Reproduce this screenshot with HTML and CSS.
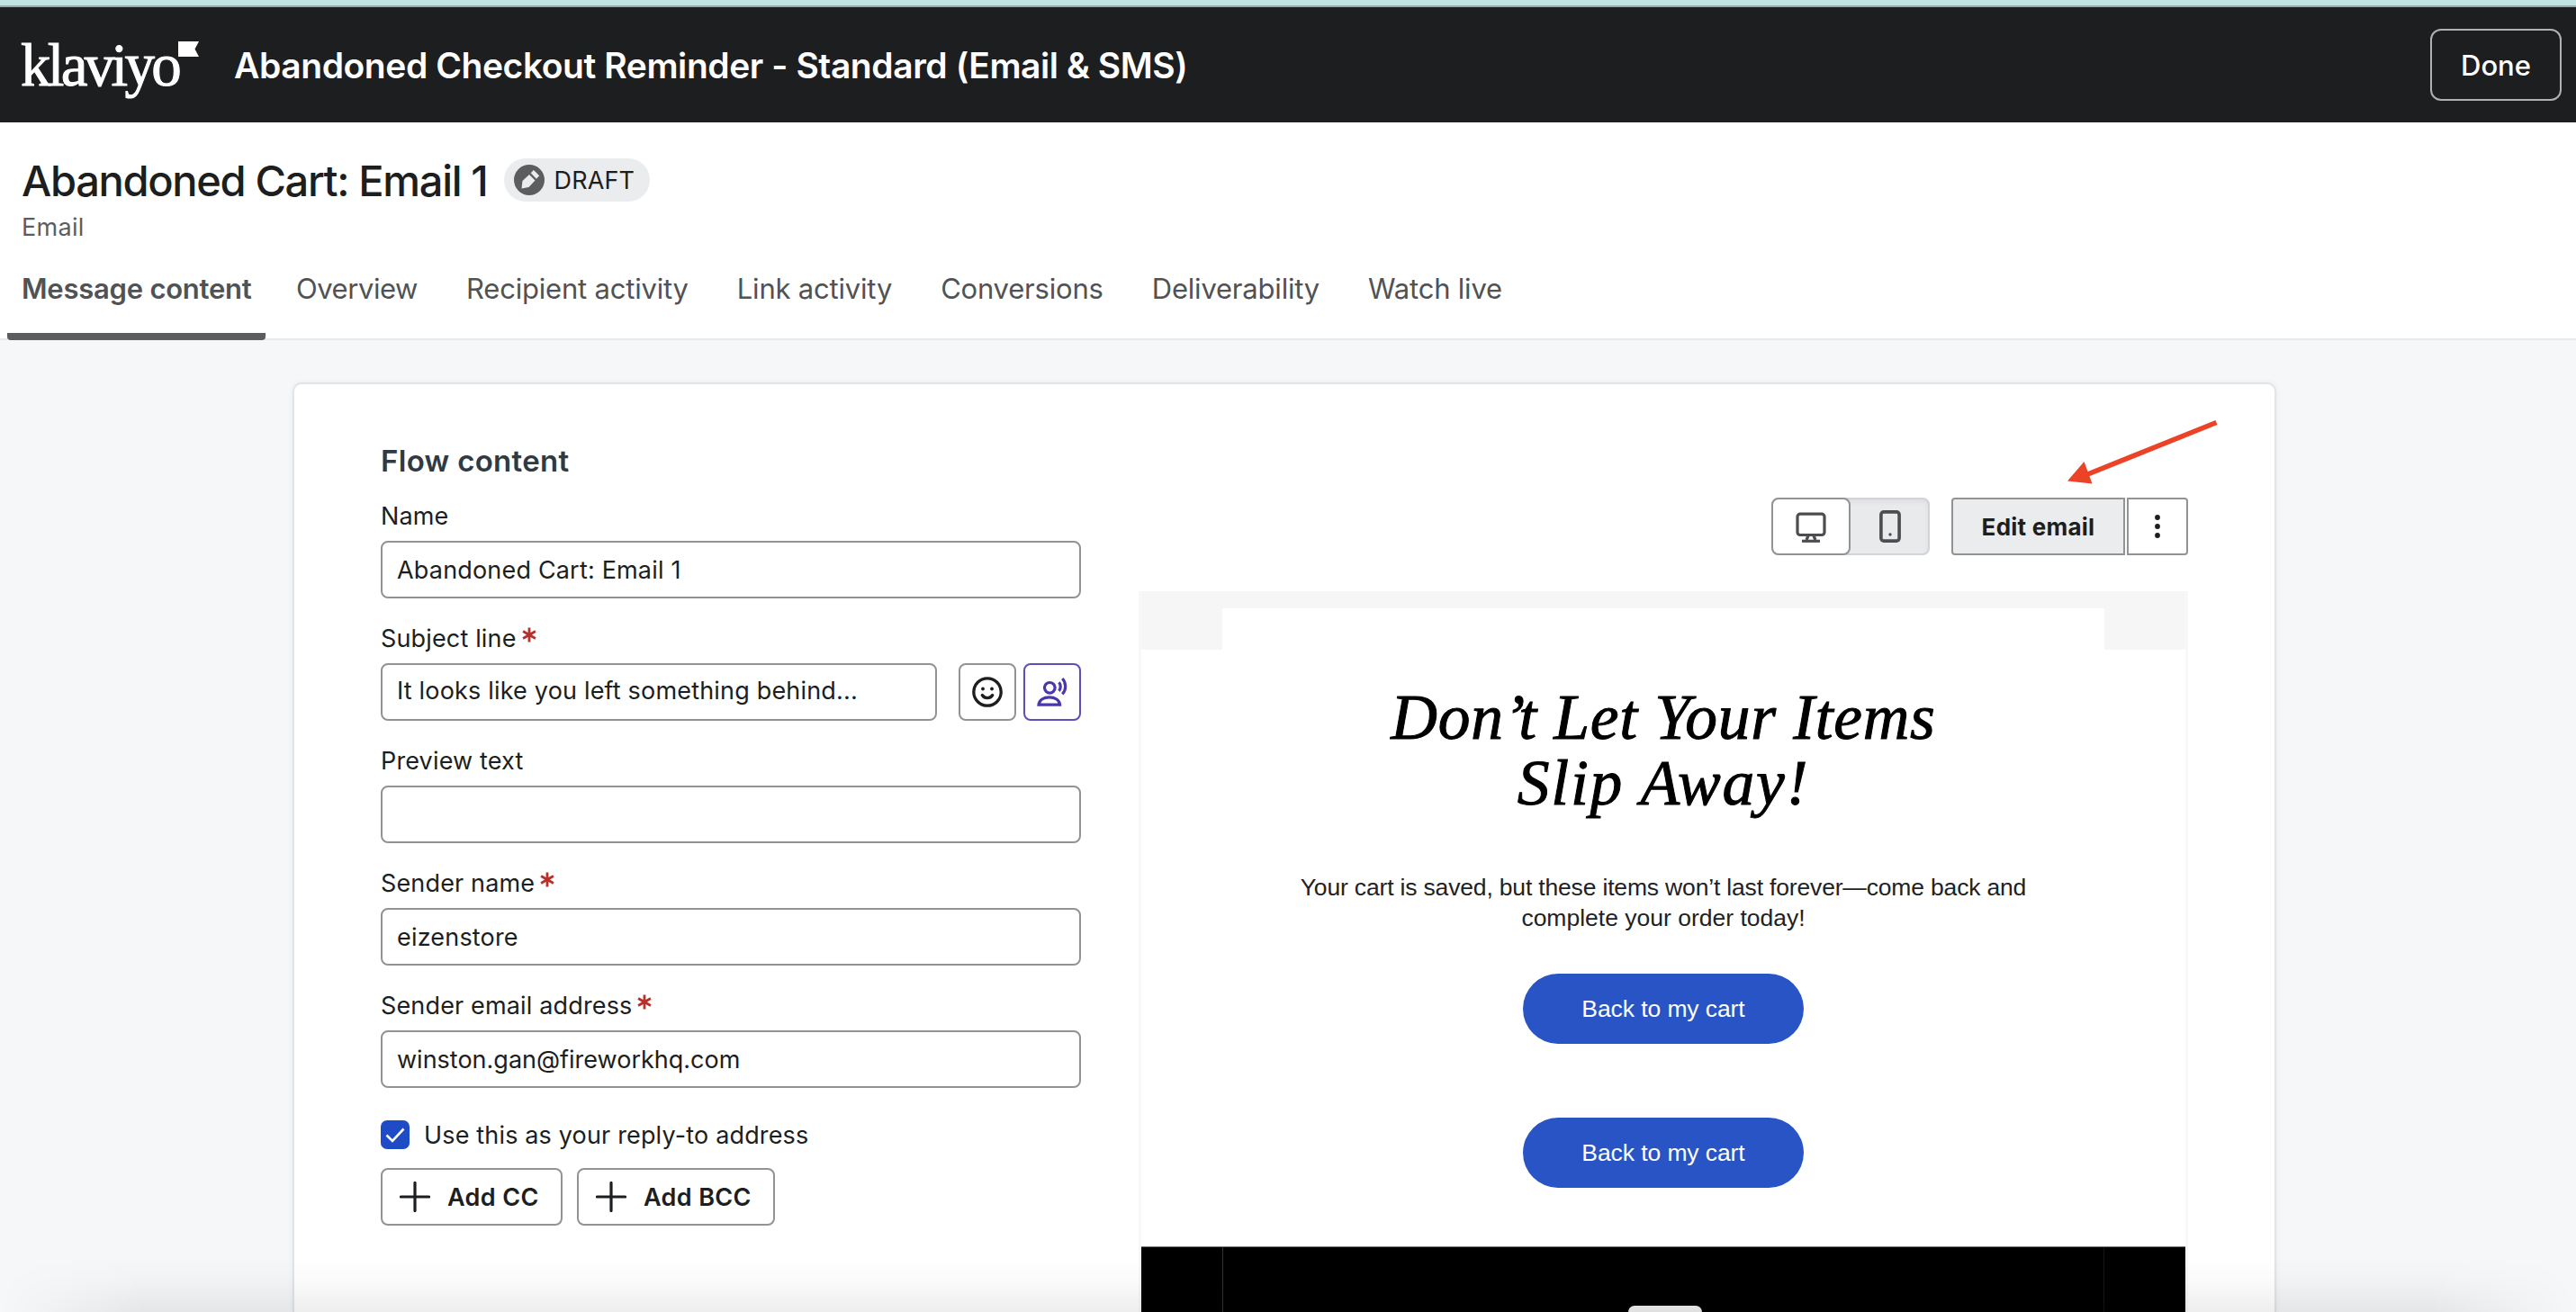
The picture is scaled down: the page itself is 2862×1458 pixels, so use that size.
FILE: index.html
```
<!DOCTYPE html>
<html lang="en">
<head>
<meta charset="utf-8">
<title>Abandoned Cart: Email 1</title>
<link rel="stylesheet" href="styles.css">
</head>
<body>
<header class="topbar">
  <div class="logo">
    <span class="logo-word">klaviyo</span>
    <svg class="logo-flag" width="23" height="17" viewBox="0 0 23 17"><path d="M0 0h23l-4.500 8.500L23 17H0z" fill="#fff"/></svg>
  </div>
  <div class="flow-title">Abandoned Checkout Reminder - Standard (Email &amp; SMS)</div>
  <button class="done">Done</button>
</header>

<section class="page-head">
  <div class="title-row">
    <h1>Abandoned Cart: Email 1</h1>
    <span class="pill">
      <svg width="34" height="34" viewBox="0 0 34 34"><circle cx="17" cy="17" r="17" fill="#5c5d5f"/><path d="M8.500 26.500 9.500 18 17 11l6.500 6.500-7 7.500z" fill="#ebecee"/><path d="m18.700 9.300 3.200-3.300 6.300 6.300-3.300 3.400z" fill="#ebecee"/></svg>
      <span>DRAFT</span>
    </span>
  </div>
  <div class="kind">Email</div>
  <nav class="tabs">
    <a class="tab active">Message content</a>
    <a class="tab overview">Overview</a>
    <a class="tab">Recipient activity</a>
    <a class="tab">Link activity</a>
    <a class="tab">Conversions</a>
    <a class="tab">Deliverability</a>
    <a class="tab">Watch live</a>
  </nav>
</section>

<main class="main">
  <div class="card">
    <form class="form">
      <h2>Flow content</h2>
      <div class="field">
        <label>Name</label>
        <div class="input">Abandoned Cart: Email 1</div>
      </div>
      <div class="field">
        <label>Subject line <svg class="req" viewBox="0 0 16 16"><path d="M8 0v16M1.100 4l13.800 8M14.900 4 1.100 12"/></svg></label>
        <div class="subject">
          <div class="input grow">It looks like you left something behind...</div>
          <button type="button" class="icon-btn">
            <svg width="34" height="34" viewBox="0 0 34 34" fill="none" stroke="#1d1e20" stroke-width="3.300"><circle cx="17" cy="17" r="15.200"/><path d="M11.300 20.500c1.400 2.100 3.400 3.100 5.700 3.100s4.300-1 5.700-3.100" stroke-linecap="round"/><circle cx="12" cy="13.500" r="1.900" fill="#1d1e20" stroke="none"/><circle cx="22" cy="13.500" r="1.900" fill="#1d1e20" stroke="none"/></svg>
          </button>
          <button type="button" class="icon-btn accent">
            <svg width="34" height="34" viewBox="0 0 34 34" fill="none" stroke="#4b37ab" stroke-width="3.200"><circle cx="14.300" cy="12.300" r="5.800"/><path d="M2 31.200c.4-5.400 5.600-8.400 11.800-8.400s11.400 3 11.800 8.400z"/><path d="M24.500 6.200c2.300 2.600 2.300 7 0 9.700M28.300 2c4.500 4.700 4.500 12.800 0 17.300"/></svg>
          </button>
        </div>
      </div>
      <div class="field">
        <label>Preview text</label>
        <div class="input"></div>
      </div>
      <div class="field">
        <label>Sender name <svg class="req" viewBox="0 0 16 16"><path d="M8 0v16M1.100 4l13.800 8M14.900 4 1.100 12"/></svg></label>
        <div class="input">eizenstore</div>
      </div>
      <div class="field">
        <label>Sender email address <svg class="req" viewBox="0 0 16 16"><path d="M8 0v16M1.100 4l13.800 8M14.900 4 1.100 12"/></svg></label>
        <div class="input email">winston.gan@fireworkhq.com</div>
      </div>
      <div class="check-row">
        <span class="checkbox"><svg width="32" height="32" viewBox="0 0 32 32"><path d="m6.500 16.500 6.500 6.500L25.500 9.500" fill="none" stroke="#fff" stroke-width="2.600"/></svg></span>
        <span>Use this as your reply-to address</span>
      </div>
      <div class="add-row">
        <button type="button" class="add">
          <svg width="34" height="34" viewBox="0 0 34 34"><path d="M17 1.500v31M1.500 17h31" stroke="#1d1e20" stroke-width="3.200" stroke-linecap="round"/></svg>Add CC
        </button>
        <button type="button" class="add bcc">
          <svg width="34" height="34" viewBox="0 0 34 34"><path d="M17 1.500v31M1.500 17h31" stroke="#1d1e20" stroke-width="3.200" stroke-linecap="round"/></svg>Add BCC
        </button>
      </div>
    </form>

    <div class="preview-col">
      <div class="toolbar">
        <div class="device">
          <span class="dev on"><svg width="34" height="34" viewBox="0 0 34 34" fill="none" stroke="#4c4d50" stroke-width="3.200"><rect x="2" y="2.200" width="30" height="23.300" rx="3"/><path d="M14 26.500 12 31M20 26.500 22 31"/><path d="M7 32.300h20"/></svg></span>
          <span class="dev"><svg width="24" height="36" viewBox="0 0 24 36" fill="none" stroke="#4c4d50" stroke-width="3.600"><rect x="1.900" y="1.900" width="20.200" height="32.200" rx="3"/><circle cx="12" cy="27" r="1.700" fill="#4c4d50" stroke="none"/></svg></span>
        </div>
        <div class="actions">
          <button class="edit">Edit email</button>
          <button class="more"><svg width="8" height="28" viewBox="0 0 8 28" fill="#1d1e20"><circle cx="4" cy="4" r="2.900"/><circle cx="4" cy="14" r="2.900"/><circle cx="4" cy="24" r="2.900"/></svg></button>
        </div>
        <svg class="arrow" width="170" height="72" viewBox="0 0 170 72"><path d="M165.500 6.500 20 65" stroke="#ec4226" stroke-width="5.600"/><path d="M0 71.500 18.500 50 27.500 74.500z" fill="#ec4226"/></svg>
      </div>
      <div class="email-frame">
        <div class="email-top"><div class="notch"></div></div>
        <div class="headline"><div class="line-a">Don’t Let Your Items</div><div class="line-b">Slip Away!</div></div>
        <div class="copy"><div class="copy-a">Your cart is saved, but these items won’t last forever—come back and</div><div>complete your order today!</div></div>
        <a class="cta">Back to my cart</a>
        <a class="cta">Back to my cart</a>
        <div class="footer"><div class="footer-in"><div class="footer-logo"></div></div></div>
      </div>
    </div>
  </div>
</main>
<div class="bottom-shade"></div>
</body>
</html>
```

FILE: styles.css
```
* { box-sizing: border-box; }
body {
  margin: 0;
  height: 1458px;
  overflow: hidden;
  position: relative;
  display: flex;
  flex-direction: column;
  font-family: Inter, "Liberation Sans", sans-serif;
  color: #1d1e20;
  background: #f6f7f9;
}
button { font-family: inherit; color: inherit; padding: 0; background: #fff; }
svg { display: block; flex: none; }

.topbar {
  flex: none;
  height: 136px;
  border-top: 6px solid #bfe1e2;
  box-shadow: inset 0 2px #93aaab;
  background: #1d1e20;
  color: #fff;
  display: flex;
  align-items: center;
  padding: 2px 16px 0 23px;
}
.logo { display: flex; width: 237px; height: 126px; }
.logo-word {
  font: 400 67px/126px "Liberation Serif", serif;
  letter-spacing: -3.7px;
  -webkit-text-stroke: 1px #fff;
}
.logo-flag { margin: 37px 0 0 0; }
.flow-title {
  flex: 1;
  font-size: 39px;
  font-weight: 600;
  letter-spacing: -.43px;
  line-height: 40px;
  padding-top: 2px;
  white-space: nowrap;
}
.done {
  width: 146px;
  height: 80px;
  border: 2px solid #b0b1b5;
  border-radius: 12px;
  background: none;
  font-size: 31px;
  font-weight: 500;
  padding-top: 1px;
}

.page-head {
  flex: none;
  height: 242px;
  background: #fff;
  border-bottom: 2px solid #e9eaeb;
  padding: 40px 8px 0;
}
.title-row { display: flex; height: 48px; padding-left: 16px; gap: 18px; }
h1 {
  margin: 0;
  font-size: 47px;
  font-weight: 500;
  letter-spacing: -1.33px;
  line-height: 50px;
}
.pill {
  display: flex;
  align-items: center;
  gap: 11px;
  width: 162px;
  height: 48px;
  padding-left: 11px;
  border-radius: 24px;
  background: #ebecee;
  font-size: 27px;
  letter-spacing: .14px;
}
.kind {
  margin-top: 9px;
  padding-left: 16px;
  font-size: 27px;
  letter-spacing: .3px;
  line-height: 39px;
  color: #5c5d5f;
}
.tabs { display: flex; gap: 23px; height: 106px; }
.tab {
  height: 106px;
  padding: 0 16px 0 15px;
  font-size: 31px;
  letter-spacing: -.2px;
  line-height: 98px;
  color: #515254;
  white-space: nowrap;
}
.tab.overview { letter-spacing: -.45px; }
.tab.active {
  width: 287px;
  margin-right: -4px;
  padding: 0 0 0 16px;
  letter-spacing: -.24px;
  font-weight: 600;
  background: linear-gradient(#5c5d5f, #5c5d5f) no-repeat 0 100% / 100% 8px;
  border-radius: 4px;
}

.main { flex: 1; min-height: 0; padding: 47px 333px 0 325px; }
.card {
  height: 100%;
  overflow: hidden;
  display: flex;
  gap: 64px;
  padding: 0 96px;
  background: #fff;
  border: 2px solid #e1e4e8;
  border-bottom: 0;
  border-radius: 10px 10px 0 0;
  box-shadow: 0 0 6px rgba(30, 40, 50, .06);
}
.form { width: 778px; padding-top: 65px; }
h2 {
  margin: 0 0 26px;
  font-size: 33px;
  font-weight: 600;
  line-height: 40px;
  letter-spacing: .3px;
  color: #2f3a43;
}
.field { height: 107px; margin-bottom: 29px; }
.field label {
  display: flex;
  align-items: center;
  gap: 6px;
  height: 31px;
  margin-bottom: 12px;
  font-size: 27px;
  letter-spacing: .15px;
}
.req { width: 16px; height: 17px; margin-bottom: 8px; fill: none; stroke: #b92f2b; stroke-width: 2.8; }
.input {
  height: 64px;
  border: 2px solid #929394;
  border-radius: 8px;
  padding-left: 16px;
  font-size: 27px;
  letter-spacing: .18px;
  line-height: 61px;
  background: #fff;
}
.input.email { letter-spacing: 0; }
.subject { display: flex; }
.grow { flex: 1; margin-right: 24px; line-height: 58px; }
.icon-btn {
  display: flex;
  align-items: center;
  justify-content: center;
  width: 64px;
  height: 64px;
  border: 2px solid #929394;
  border-radius: 8px;
}
.icon-btn.accent { margin-left: 8px; border-color: #5f4db8; }
.check-row {
  display: flex;
  align-items: center;
  gap: 16px;
  height: 32px;
  margin-top: 36px;
  font-size: 27px;
  letter-spacing: .16px;
}
.checkbox { width: 32px; height: 32px; border-radius: 7px; background: #1f4bc6; }
.add-row { display: flex; gap: 16px; margin-top: 21px; }
.add {
  display: flex;
  align-items: center;
  gap: 19px;
  width: 202px;
  height: 64px;
  padding-left: 19px;
  border: 2px solid #929394;
  border-radius: 8px;
  font-size: 27px;
  font-weight: 600;
  letter-spacing: .35px;
}
.add.bcc { width: 220px; }

.preview-col { width: 1166px; padding-top: 126px; }
.toolbar { position: relative; display: flex; justify-content: flex-end; gap: 24px; }
.device {
  display: flex;
  width: 176px;
  height: 64px;
  border-radius: 8px;
  background: #e9eaec;
  box-shadow: inset 0 0 0 2px #d2d4da, inset 0 3px 7px rgba(0, 0, 0, .08);
}
.dev { display: flex; align-items: center; justify-content: center; width: 88px; }
.dev.on { background: #fff; border: 2px solid #929394; border-radius: 8px; }
.dev.on svg { margin-top: 1px; }
.actions { display: flex; gap: 2px; }
.edit {
  width: 193px;
  height: 64px;
  border: 2px solid #929394;
  border-radius: 4px 0 0 4px;
  background: #ebecee;
  font-size: 26px;
  font-weight: 700;
  letter-spacing: .25px;
}
.more {
  display: flex;
  align-items: center;
  justify-content: center;
  width: 68px;
  height: 64px;
  border: 2px solid #929394;
  border-radius: 0 4px 4px 0;
}
.arrow { position: absolute; left: 1032px; top: -90px; overflow: visible; }

.email-frame {
  margin-top: 40px;
  width: 1166px;
  border: solid #f8f8f9;
  border-width: 0 3px;
  display: flex;
  flex-direction: column;
  align-items: center;
}
.email-top { align-self: stretch; height: 65px; background: #f6f6f7; padding: 19px 90px 0; }
.notch { height: 46px; background: #fff; }
.headline {
  margin-top: 38px;
  font: italic 400 71.5px/73px "Liberation Serif", serif;
  color: #000;
  -webkit-text-stroke: 1px #000;
  text-align: center;
}
.line-a { letter-spacing: .7px; }
.line-b { letter-spacing: 1.8px; }
.copy {
  margin-top: 63px;
  font: 400 26.5px/34px "Liberation Sans", sans-serif;
  color: #222;
  text-align: center;
}
.copy-a { letter-spacing: -.17px; }
.cta {
  width: 312px;
  height: 78px;
  margin-top: 45px;
  border-radius: 39px;
  background: #2854c5;
  color: #fff;
  font: 400 26.5px/78px "Liberation Sans", sans-serif;
  letter-spacing: -.09px;
  text-align: center;
}
.cta + .cta { margin-top: 82px; }
.footer {
  align-self: stretch;
  height: 220px;
  margin-top: 65px;
  padding: 0 90px;
  background: #000;
  border-top: 1px solid #777;
}
.footer-in { height: 220px; border-left: 1px solid #333; border-right: 1px solid #151515; padding-top: 65px; }
.footer-logo { width: 82px; height: 60px; margin: 0 auto; border-radius: 7px; background: #f1f1f1; transform: translateX(2px); }

.bottom-shade {
  position: absolute;
  left: 0;
  right: 0;
  bottom: 0;
  height: 62px;
  background: linear-gradient(transparent, rgba(0, 0, 0, .015) 40%, rgba(0, 0, 0, .065));
  -webkit-mask-image: linear-gradient(90deg, transparent, #000 160px, #000 calc(100% - 160px), transparent);
  mask-image: linear-gradient(90deg, transparent, #000 160px, #000 calc(100% - 160px), transparent);
}
```
